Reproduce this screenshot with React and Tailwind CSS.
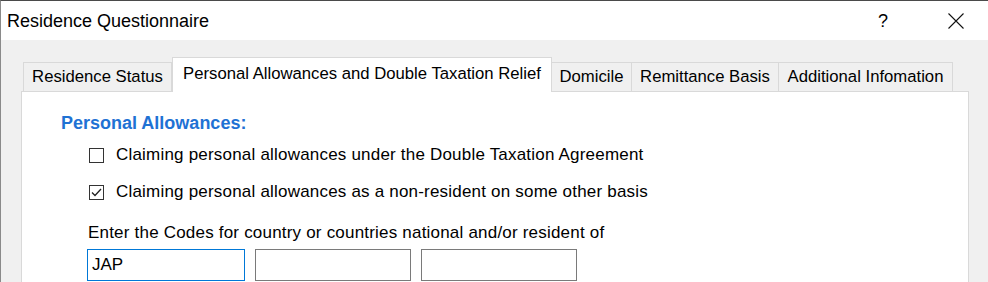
import React from "react";

const tabs = [
  { label: "Residence Status", w: "w-[149px]" },
  { label: "Personal Allowances and Double Taxation Relief", w: "w-[380px]", active: true },
  { label: "Domicile", w: "w-[80px]" },
  { label: "Remittance Basis", w: "w-[147px]" },
  { label: "Additional Infomation", w: "w-[174px]" },
];

const CheckBox = ({ checked }) => (
  <span className="flex h-[15px] w-[15px] shrink-0 items-center justify-center border border-[#333333] bg-white">
    {checked && (
      <svg viewBox="0 0 13 13" className="h-[13px] w-[13px]">
        <path d="M2 6.5 L5 9.5 L11 3" fill="none" stroke="#222" strokeWidth="1.3" />
      </svg>
    )}
  </span>
);

export default function App() {
  return (
    <div
      className="h-[282px] w-[988px] overflow-hidden border-l border-t border-l-[#8a8a8a] border-t-[#4a4a4a] bg-[#f0f0f0] text-black"
      style={{ fontFamily: '"Liberation Sans", Arial, sans-serif' }}
    >
      {/* title bar */}
      <div className="flex h-[39px] items-center bg-white pl-[6px]">
        <span className="text-[18px] leading-none">Residence Questionnaire</span>
        <span className="ml-auto mr-[60px] text-[18px] leading-none">?</span>
        <svg viewBox="0 0 16 16" className="mr-[24px] h-[16px] w-[16px]">
          <path d="M0.5 0.5 L15.5 15.5 M15.5 0.5 L0.5 15.5" stroke="#111" strokeWidth="1.1" fill="none" />
        </svg>
      </div>

      <div className="pl-[20px] pt-[18px]">
        {/* tab strip */}
        <div className="flex h-[33px] items-end pl-[2px]">
          {tabs.map((t) =>
            t.active ? (
              <div
                key={t.label}
                className={`${t.w} relative z-10 -mb-px flex h-[35px] items-center justify-center whitespace-nowrap border border-b-0 border-[#d9d9d9] bg-white pb-[2px] text-[16.7px]`}
              >
                {t.label}
              </div>
            ) : (
              <div
                key={t.label}
                className={`${t.w} flex h-[29px] items-center justify-center whitespace-nowrap border border-b-0 border-l-0 border-[#d9d9d9] bg-[#f0f0f0] text-[16.7px] first:border-l`}
              >
                {t.label}
              </div>
            )
          )}
        </div>

        {/* panel */}
        <div className="h-[200px] w-[948px] border border-[#d9d9d9] bg-white pt-[21px]">
          <div className="pl-[39px] text-[18px] font-bold leading-[20px] text-[#1f72d4]">
            Personal Allowances:
          </div>

          <div className="mt-[10px] flex h-[24px] items-center gap-[12px] pl-[67px] text-[17px] tracking-[0.2px]">
            <CheckBox />
            <span>Claiming personal allowances under the Double Taxation Agreement</span>
          </div>

          <div className="mt-[13px] flex h-[24px] items-center gap-[12px] pl-[67px] text-[17px] tracking-[0.2px]">
            <CheckBox checked />
            <span>Claiming personal allowances as a non-resident on some other basis</span>
          </div>

          <div className="mt-[19px] h-[20px] pl-[66px] text-[17px] leading-[20px] tracking-[0.2px]">
            Enter the Codes for country or countries national and/or resident of
          </div>

          <div className="mt-[6px] flex gap-[10px] pl-[65px]">
            <div className="flex h-[32px] w-[158px] items-center border border-[#0078d7] px-[4px] text-[17px]">
              JAP
            </div>
            <div className="h-[32px] w-[156px] border border-[#7a7a7a]" />
            <div className="h-[32px] w-[156px] border border-[#7a7a7a]" />
          </div>
        </div>
      </div>
    </div>
  );
}
